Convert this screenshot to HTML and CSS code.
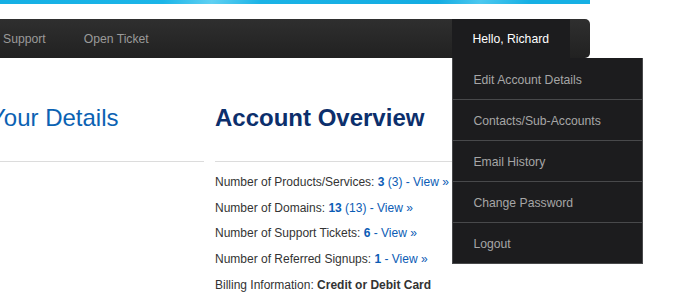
FILE: index.html
```html
<!DOCTYPE html>
<html lang="en">
<head>
  <meta charset="UTF-8" />
  <title>Client Area</title>
  <link rel="stylesheet" href="styles.css">
</head>
<body>

  <div class="page">
    <div class="topBar"></div>

    <nav class="navbar">
      <ul class="navLinks">
        <li><a href="#">Support</a></li>
        <li><a href="#">Open Ticket</a></li>
      </ul>
      <ul class="navUser">
        <li class="userMenu">
          <a href="#" class="userName">Hello, Richard</a>
          <ul class="dropdown">
            <li><a href="#">Edit Account Details</a></li>
            <li><a href="#">Contacts/Sub-Accounts</a></li>
            <li><a href="#">Email History</a></li>
            <li><a href="#">Change Password</a></li>
            <li><a href="#">Logout</a></li>
          </ul>
        </li>
      </ul>
    </nav>

    <div class="content">
      <section class="colLeft">
        <h2 class="detailsTitle">Your Details</h2>
        <hr />
      </section>

      <section class="colRight">
        <h2 class="overviewTitle">Account Overview</h2>
        <hr />
        <p>Number of Products/Services: <a href="#"><b>3</b> (3) - View &raquo;</a></p>
        <p>Number of Domains: <a href="#"><b>13</b> (13) - View &raquo;</a></p>
        <p>Number of Support Tickets: <a href="#"><b>6</b> - View &raquo;</a></p>
        <p>Number of Referred Signups: <a href="#"><b>1</b> - View &raquo;</a></p>
        <p>Billing Information: <b>Credit or Debit Card</b></p>
      </section>
    </div>
  </div>

</body>
</html>
```

FILE: styles.css
```css
body {
  margin: 0;
  background: #fff;
  color: #333;
  font-family: 'Liberation Sans', Arial, Helvetica, sans-serif;
  font-size: 12px;
  overflow: hidden;
}
a {
  text-decoration: none;
}
ul {
  list-style: none;
  margin: 0;
  padding: 0;
}
.page {
  width: 610px;
  margin-left: -20px;
}
.topBar {
  height: 4px;
  background: linear-gradient(100deg, #14afe4 0%, #1bb5e8 30%, #5fd0f2 38%, #1ab3e6 46%, #13ace2 75%, #4cc8ef 82%, #16b0e4 90%);
}
.navbar {
  display: flex;
  height: 39px;
  margin-top: 15px;
  padding-right: 20px;
  background: linear-gradient(#2f2f2f, #212121);
  border-radius: 0 5px 5px 0;
}
.navLinks {
  display: flex;
}
.navLinks a, .userName {
  display: block;
  line-height: 38px;
  padding: 1px 19px 0;
  font-size: 12.2px;
  color: #9a9a9a;
}
.navLinks li:first-child a {
  padding-left: 23px;
}
.navUser {
  margin-left: auto;
}
.userMenu {
  position: relative;
  background: #1c1c1e;
}
.userName {
  color: #fff;
  padding: 1px 21px 0 20px;
}
.dropdown {
  position: absolute;
  top: 100%;
  left: 0;
  width: 191px;
  box-sizing: border-box;
  background: #1c1c1e;
  border: 1px solid #48494b;
  border-top: none;
  z-index: 2;
}
.dropdown li {
  border-bottom: 1px solid #48494b;
}
.dropdown li:first-child {
  padding-top: 1px;
}
.dropdown li:last-child {
  border-bottom: none;
}
.dropdown a {
  display: block;
  line-height: 38px;
  padding: 2px 0 0 20px;
  font-size: 12.2px;
  color: #a6a6a6;
}
.content {
  display: flex;
  gap: 11px;
  padding-top: 46px;
}
.colLeft {
  width: 224px;
}
.colRight {
  flex: 1;
}
h2 {
  margin: 0 0 30px;
  font-size: 24px;
  line-height: 27px;
}
.detailsTitle {
  font-weight: normal;
  color: #0b62b3;
  padding-left: 10px;
}
.overviewTitle {
  font-weight: bold;
  color: #0c2f6c;
}
hr {
  margin: 0;
  border: none;
  border-top: 1px solid #dcdcdc;
}
.colRight hr {
  margin-bottom: 11px;
}
.colRight p {
  margin: 0 0 7.7px;
  line-height: 18px;
}
.colRight a {
  color: #0b5cb5;
}
```
